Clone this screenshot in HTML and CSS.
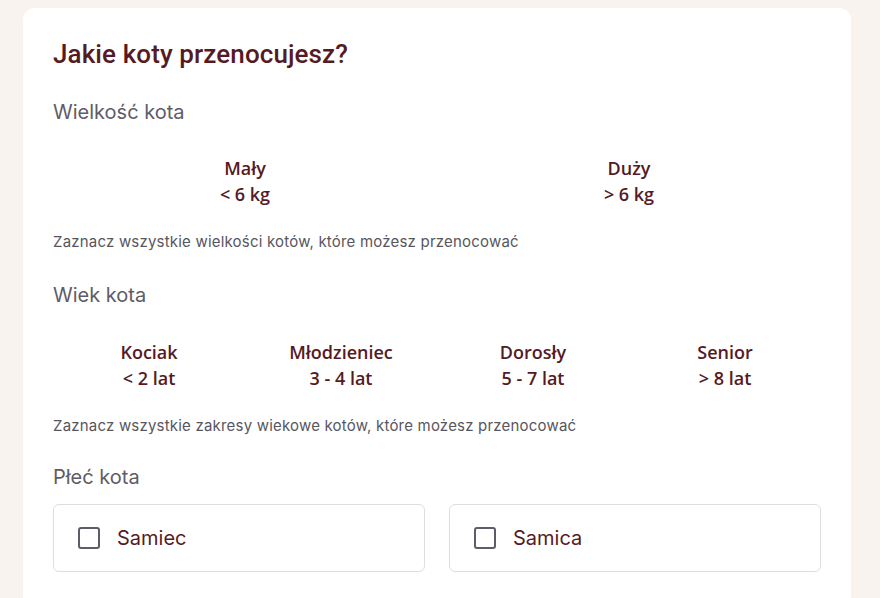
FILE: index.html
```html
<!DOCTYPE HTML>
<html>
<head>
  <meta charset="UTF-8">
  <meta name="viewport" content="width=device-width, initial-scale=1">
  <link rel="stylesheet" href="styles.css">
</head>
<body>
  <div class="card">
    <h2 class="title">Jakie koty przenocujesz?</h2>

    <p class="label">Wielkość kota</p>
    <div class="options two">
      <div class="option"><span>Mały</span><span>&lt; 6 kg</span></div>
      <div class="option"><span>Duży</span><span>&gt; 6 kg</span></div>
    </div>
    <p class="hint">Zaznacz wszystkie wielkości kotów, które możesz przenocować</p>

    <p class="label">Wiek kota</p>
    <div class="options four">
      <div class="option"><span>Kociak</span><span>&lt; 2 lat</span></div>
      <div class="option"><span>Młodzieniec</span><span>3 - 4 lat</span></div>
      <div class="option"><span>Dorosły</span><span>5 - 7 lat</span></div>
      <div class="option"><span>Senior</span><span>&gt; 8 lat</span></div>
    </div>
    <p class="hint">Zaznacz wszystkie zakresy wiekowe kotów, które możesz przenocować</p>

    <p class="label gender">Płeć kota</p>
    <div class="checks">
      <label class="check"><span class="box"></span>Samiec</label>
      <label class="check"><span class="box"></span>Samica</label>
    </div>
  </div>
</body>
</html>
```

FILE: styles.css
```css
body
{
  margin: 0;
  background-color: #f8f3ef;
  font-family: Inter, "Noto Sans", sans-serif;
  padding: 8px 29px 0 23px;
}
.card
{
  background: #ffffff;
  border-radius: 12px;
  padding: 30px 30px 40px 30px;
  min-height: 600px;
}
.title
{
  margin: 0;
  font-family: Roboto, sans-serif;
  font-weight: 500;
  font-size: 26px;
  line-height: 32px;
  letter-spacing: 0.1px;
  color: #561a24;
}
.label
{
  margin: 30px 0 0 0;
  font-size: 20px;
  line-height: 24px;
  color: #5e5c66;
}
.options
{
  display: grid;
  margin-top: 31px;
}
.options.two
{
  grid-template-columns: 1fr 1fr;
}
.options.four
{
  grid-template-columns: repeat(4, 1fr);
  margin-top: 32px;
}
.option
{
  display: flex;
  flex-direction: column;
  align-items: center;
  font-family: "Open Sans", sans-serif;
  font-weight: 600;
  font-size: 18px;
  line-height: 26px;
  letter-spacing: 0;
  color: #561a24;
}
.hint
{
  margin: 25px 0 0 0;
  font-size: 15px;
  line-height: 20px;
  letter-spacing: 0.2px;
  color: #57565e;
}
.hint + .label
{
  margin-top: 31px;
}
.hint + .label.gender
{
  margin-top: 29px;
}
.checks
{
  display: grid;
  grid-template-columns: 1fr 1fr;
  gap: 24px;
  margin-top: 15px;
}
.check
{
  display: flex;
  align-items: center;
  height: 66px;
  border: 1px solid #dedde0;
  border-radius: 6px;
  padding-left: 24px;
  font-size: 20px;
  color: #561a24;
}
.box
{
  width: 18px;
  height: 18px;
  border: 2.5px solid #5e5c66;
  border-radius: 3px;
  margin-right: 17px;
}
```
